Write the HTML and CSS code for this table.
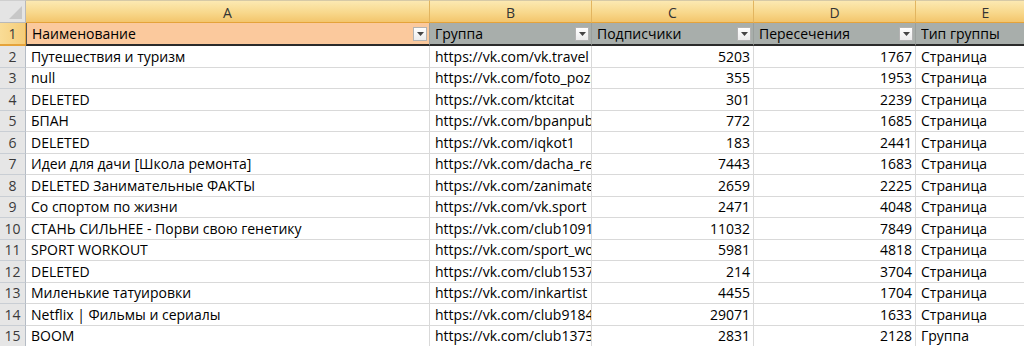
FILE: index.html
```html
<!DOCTYPE html>
<html lang="ru">
<head>
<meta charset="utf-8">
<title>Лист1</title>
<link rel="stylesheet" href="styles.css">
</head>
<body>
<div class="sheet">
  <div class="corner"><span class="tri"></span></div>
  <div class="colhead">A</div>
  <div class="colhead">B</div>
  <div class="colhead">C</div>
  <div class="colhead">D</div>
  <div class="colhead">E</div>

  <div class="rowhead sel">1</div>
  <div class="th first"><span class="lbl">Наименование</span><span class="dd"><svg width="7" height="4" viewBox="0 0 7 4"><path d="M0 0H7L3.5 4Z" fill="#444"/></svg></span></div>
  <div class="th"><span class="lbl">Группа</span><span class="dd"><svg width="7" height="4" viewBox="0 0 7 4"><path d="M0 0H7L3.5 4Z" fill="#444"/></svg></span></div>
  <div class="th"><span class="lbl">Подписчики</span><span class="dd"><svg width="7" height="4" viewBox="0 0 7 4"><path d="M0 0H7L3.5 4Z" fill="#444"/></svg></span></div>
  <div class="th"><span class="lbl">Пересечения</span><span class="dd"><svg width="7" height="4" viewBox="0 0 7 4"><path d="M0 0H7L3.5 4Z" fill="#444"/></svg></span></div>
  <div class="th"><span class="lbl">Тип группы</span></div>

  <div class="rowhead">2</div><div class="c">Путешествия и туризм</div><div class="c">https://vk.com/vk.travel</div><div class="c n">5203</div><div class="c n">1767</div><div class="c">Страница</div>
  <div class="rowhead">3</div><div class="c">null</div><div class="c">https://vk.com/foto_pozitiv</div><div class="c n">355</div><div class="c n">1953</div><div class="c">Страница</div>
  <div class="rowhead">4</div><div class="c">DELETED</div><div class="c">https://vk.com/ktcitat</div><div class="c n">301</div><div class="c n">2239</div><div class="c">Страница</div>
  <div class="rowhead">5</div><div class="c">БПАН</div><div class="c">https://vk.com/bpanpub</div><div class="c n">772</div><div class="c n">1685</div><div class="c">Страница</div>
  <div class="rowhead">6</div><div class="c">DELETED</div><div class="c">https://vk.com/iqkot1</div><div class="c n">183</div><div class="c n">2441</div><div class="c">Страница</div>
  <div class="rowhead">7</div><div class="c">Идеи для дачи [Школа ремонта]</div><div class="c">https://vk.com/dacha_remont</div><div class="c n">7443</div><div class="c n">1683</div><div class="c">Страница</div>
  <div class="rowhead">8</div><div class="c">DELETED Занимательные ФАКТЫ</div><div class="c">https://vk.com/zanimatelnye</div><div class="c n">2659</div><div class="c n">2225</div><div class="c">Страница</div>
  <div class="rowhead">9</div><div class="c">Со спортом по жизни</div><div class="c">https://vk.com/vk.sport</div><div class="c n">2471</div><div class="c n">4048</div><div class="c">Страница</div>
  <div class="rowhead">10</div><div class="c">СТАНЬ СИЛЬНЕЕ - Порви свою генетику</div><div class="c">https://vk.com/club109133</div><div class="c n">11032</div><div class="c n">7849</div><div class="c">Страница</div>
  <div class="rowhead">11</div><div class="c">SPORT WORKOUT</div><div class="c">https://vk.com/sport_workout</div><div class="c n">5981</div><div class="c n">4818</div><div class="c">Страница</div>
  <div class="rowhead">12</div><div class="c">DELETED</div><div class="c">https://vk.com/club153704</div><div class="c n">214</div><div class="c n">3704</div><div class="c">Страница</div>
  <div class="rowhead">13</div><div class="c">Миленькие татуировки</div><div class="c">https://vk.com/inkartist</div><div class="c n">4455</div><div class="c n">1704</div><div class="c">Страница</div>
  <div class="rowhead">14</div><div class="c">Netflix | Фильмы и сериалы</div><div class="c">https://vk.com/club918422</div><div class="c n">29071</div><div class="c n">1633</div><div class="c">Страница</div>
  <div class="rowhead">15</div><div class="c">BOOM</div><div class="c">https://vk.com/club137328</div><div class="c n">2831</div><div class="c n">2128</div><div class="c">Группа</div>
</div>
</body>
</html>
```

FILE: styles.css
```css
* { box-sizing: border-box; }
html, body { margin: 0; padding: 0; background: #fff; }
body {
  font-family: "Open Sans", "Liberation Sans", Arial, sans-serif;
  font-size: 14px;
  color: #000;
  overflow: hidden;
}
.sheet {
  display: grid;
  grid-template-columns: 26px 404px 162px 162px 162px 140px;
  grid-template-rows: 23px 23px repeat(14, 21.5px);
}
.corner {
  background: #e4e4e4;
  border-top: 1px solid #cfcfcf;
  border-right: 1px solid #b9b9b9;
  border-bottom: 1px solid #b9b9b9;
  display: flex;
  justify-content: flex-end;
  align-items: flex-end;
  padding: 0 3px 3px 0;
}
.tri {
  width: 13px;
  height: 13px;
  background: #c7c7c7;
  clip-path: polygon(100% 0, 100% 100%, 0 100%);
}
.colhead {
  background: linear-gradient(#fce9b2, #f8d88c 55%, #f3c56c);
  border-top: 1px solid #d6c9a6;
  border-right: 1px solid #e2b560;
  border-bottom: 1px solid #e5a33a;
  color: #333;
  display: flex;
  align-items: center;
  justify-content: center;
  padding-top: 1px;
}
.rowhead {
  background: #e6e6e6;
  border-right: 1px solid #b5bcc5;
  border-bottom: 1px solid #c9ced4;
  color: #3a3a3a;
  display: flex;
  align-items: center;
  justify-content: center;
}
.rowhead.sel {
  background: linear-gradient(90deg, #f9dc96, #f5cd7a);
  border-right: 1px solid #e5a33a;
  border-bottom: 2px solid #e5a33a;
}
.th {
  background: #a8aeab;
  border-right: 1px solid #9a9f9c;
  border-bottom: 2px solid #2b2b2b;
  display: flex;
  align-items: center;
  padding: 0 2px 0 5px;
  white-space: nowrap;
  overflow: hidden;
}
.th.first {
  background: #fbc99d;
  border-left: 1px solid #555;
}
.lbl { flex: 1; overflow: hidden; }
.dd {
  width: 14px;
  height: 14px;
  flex: none;
  border: 1px solid #b3b3b3;
  background: linear-gradient(#ffffff, #ebebeb);
  display: flex;
  align-items: center;
  justify-content: center;
  padding-top: 1px;
}
.dd svg { display: block; }
.c {
  border-right: 1px solid #d9d9d9;
  border-bottom: 1px solid #d9d9d9;
  padding: 0 3px 0 5px;
  white-space: nowrap;
  overflow: hidden;
  display: flex;
  align-items: center;
}
.c.n { justify-content: flex-end; }
```
